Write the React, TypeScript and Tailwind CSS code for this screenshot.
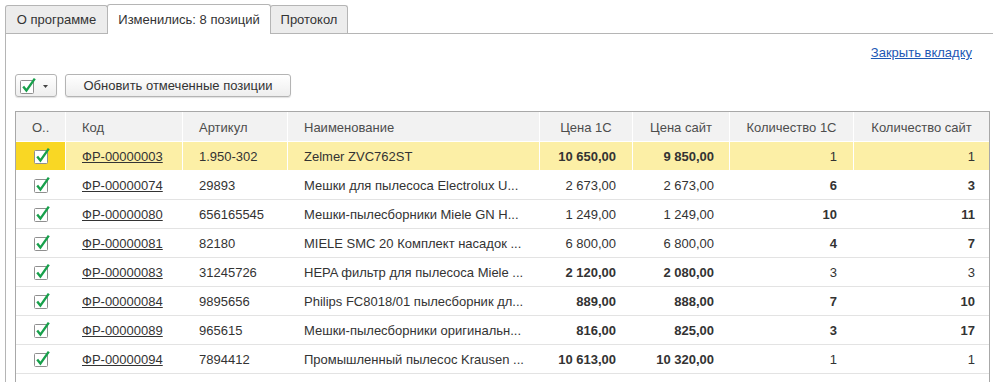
import React from "react"

const rows = [
  { code: "ФР-00000003", art: "1.950-302", name: "Zelmer ZVC762ST", p1: "10 650,00", p2: "9 850,00", pb: true, q1: "1", q2: "1", qb: false },
  { code: "ФР-00000074", art: "29893", name: "Мешки для пылесоса Electrolux U...", p1: "2 673,00", p2: "2 673,00", pb: false, q1: "6", q2: "3", qb: true },
  { code: "ФР-00000080", art: "656165545", name: "Мешки-пылесборники Miele GN H...", p1: "1 249,00", p2: "1 249,00", pb: false, q1: "10", q2: "11", qb: true },
  { code: "ФР-00000081", art: "82180", name: "MIELE SMC 20 Комплект насадок ...", p1: "6 800,00", p2: "6 800,00", pb: false, q1: "4", q2: "7", qb: true },
  { code: "ФР-00000083", art: "31245726", name: "HEPA фильтр для пылесоса Miele ...", p1: "2 120,00", p2: "2 080,00", pb: true, q1: "3", q2: "3", qb: false },
  { code: "ФР-00000084", art: "9895656", name: "Philips FC8018/01 пылесборник дл...", p1: "889,00", p2: "888,00", pb: true, q1: "7", q2: "10", qb: true },
  { code: "ФР-00000089", art: "965615", name: "Мешки-пылесборники оригинальн...", p1: "816,00", p2: "825,00", pb: true, q1: "3", q2: "17", qb: true },
  { code: "ФР-00000094", art: "7894412", name: "Промышленный пылесос Krausen ...", p1: "10 613,00", p2: "10 320,00", pb: true, q1: "1", q2: "1", qb: false },
]

const gridCols = "grid grid-cols-[50px_117px_105px_252px_93px_97px_124px_135px]"

function Check() {
  return (
    <svg width="18" height="18" viewBox="0 0 18 18">
      <rect x="0.5" y="3.5" width="13" height="13" rx="1" fill="#fff" stroke="#8f8f8f" />
      <path d="M3.2 9.6 L6.4 13.6 L14.8 1.6" fill="none" stroke="#17a04b" strokeWidth="2.4" strokeLinejoin="miter" />
    </svg>
  )
}

function Tab({ label, active, w }: { label: string; active?: boolean; w: string }) {
  return (
    <div
      className={`${w} flex items-center justify-center border border-b-0 border-[#b5b5b5] rounded-t-[3px] text-[13px] text-[#333] ${
        active ? "h-[30px] bg-white relative z-10 -mb-px" : "h-[28px] bg-[#ececec]"
      }`}
    >
      {label}
    </div>
  )
}

export default function App() {
  return (
    <div className="w-[995px] h-[382px] overflow-hidden bg-white text-[#333]" style={{ fontFamily: '"Liberation Sans", Arial, sans-serif' }}>
      {/* tabs */}
      <div className="flex items-end pl-[5px] pt-[4px]">
        <Tab label="О программе" w="w-[103px]" />
        <div className="-ml-px">
          <Tab label="Изменились: 8 позиций" active w="w-[164px]" />
        </div>
        <div className="-ml-px">
          <Tab label="Протокол" w="w-[78px]" />
        </div>
      </div>

      <div className="ml-[5px] w-[988px] h-[400px] border-t border-l border-[#b5b5b5] pl-[9px]">
        <div className="flex justify-end pr-[21px] mt-[11px] h-[16px]">
          <a className="text-[13px] leading-[16px] text-[#1d58b5] underline cursor-pointer">Закрыть вкладку</a>
        </div>

        {/* toolbar */}
        <div className="flex gap-[8px] mt-[13px]">
          <div className="w-[42px] h-[23px] flex items-center pl-[4px] gap-[5px] border border-[#b4b4b4] rounded-[3px] bg-gradient-to-b from-white to-[#eeeeee] shadow-[0_1px_1px_rgba(0,0,0,0.12)]">
            <Check />
            <svg width="5" height="3" viewBox="0 0 5 3" className="mt-[1px]">
              <path d="M0 0 L5 0 L2.5 3 Z" fill="#444" />
            </svg>
          </div>
          <div className="w-[226px] h-[23px] flex items-center justify-center border border-[#b4b4b4] rounded-[3px] bg-gradient-to-b from-white to-[#eeeeee] shadow-[0_1px_1px_rgba(0,0,0,0.12)] text-[13px] text-[#333]">
            Обновить отмеченные позиции
          </div>
        </div>

        {/* table */}
        <div className="mt-[14px] w-[975px] h-[300px] border border-[#a8a8a8] text-[13px]">
          <div className={`${gridCols} h-[30px] bg-[#f2f2f2] border-b border-white text-[#4d4d4d]`}>
            <div className="flex items-center pt-[2px] pl-[16px] border-r border-white">О..</div>
            <div className="flex items-center pt-[2px] pl-[16px] border-r border-white">Код</div>
            <div className="flex items-center pt-[2px] pl-[16px] border-r border-white">Артикул</div>
            <div className="flex items-center pt-[2px] pl-[16px] border-r border-white">Наименование</div>
            <div className="flex items-center pt-[2px] justify-center border-r border-white">Цена 1С</div>
            <div className="flex items-center pt-[2px] justify-center border-r border-white">Цена сайт</div>
            <div className="flex items-center pt-[2px] justify-center border-r border-white">Количество 1С</div>
            <div className="flex items-center pt-[2px] justify-center">Количество сайт</div>
          </div>

          {rows.map((r, i) => {
            const sel = i === 0
            return (
              <div key={r.code} className={`${gridCols} h-[29px] border-b ${sel ? "bg-[#fcefa6] border-white" : "border-[#e3e3e3]"}`}>
                <div className={`flex items-center justify-center pl-[4px] border-r border-white ${sel ? "bg-[#f9d724]" : ""}`}>
                  <Check />
                </div>
                <div className="flex items-center pt-[2px] pl-[16px] border-r border-white">
                  <span className="underline decoration-[#333]">{r.code}</span>
                </div>
                <div className="flex items-center pt-[2px] pl-[16px] border-r border-white">{r.art}</div>
                <div className="flex items-center pt-[2px] pl-[16px] pr-[4px] border-r border-white whitespace-nowrap overflow-hidden">{r.name}</div>
                <div className={`flex items-center pt-[2px] justify-end pr-[16px] border-r border-white ${r.pb ? "font-bold" : ""}`}>{r.p1}</div>
                <div className={`flex items-center pt-[2px] justify-end pr-[15px] border-r border-white ${r.pb ? "font-bold" : ""}`}>{r.p2}</div>
                <div className={`flex items-center pt-[2px] justify-end pr-[16px] border-r border-white ${r.qb ? "font-bold" : ""}`}>{r.q1}</div>
                <div className={`flex items-center pt-[2px] justify-end pr-[14px] ${r.qb ? "font-bold" : ""}`}>{r.q2}</div>
              </div>
            )
          })}
        </div>
      </div>
    </div>
  )
}
